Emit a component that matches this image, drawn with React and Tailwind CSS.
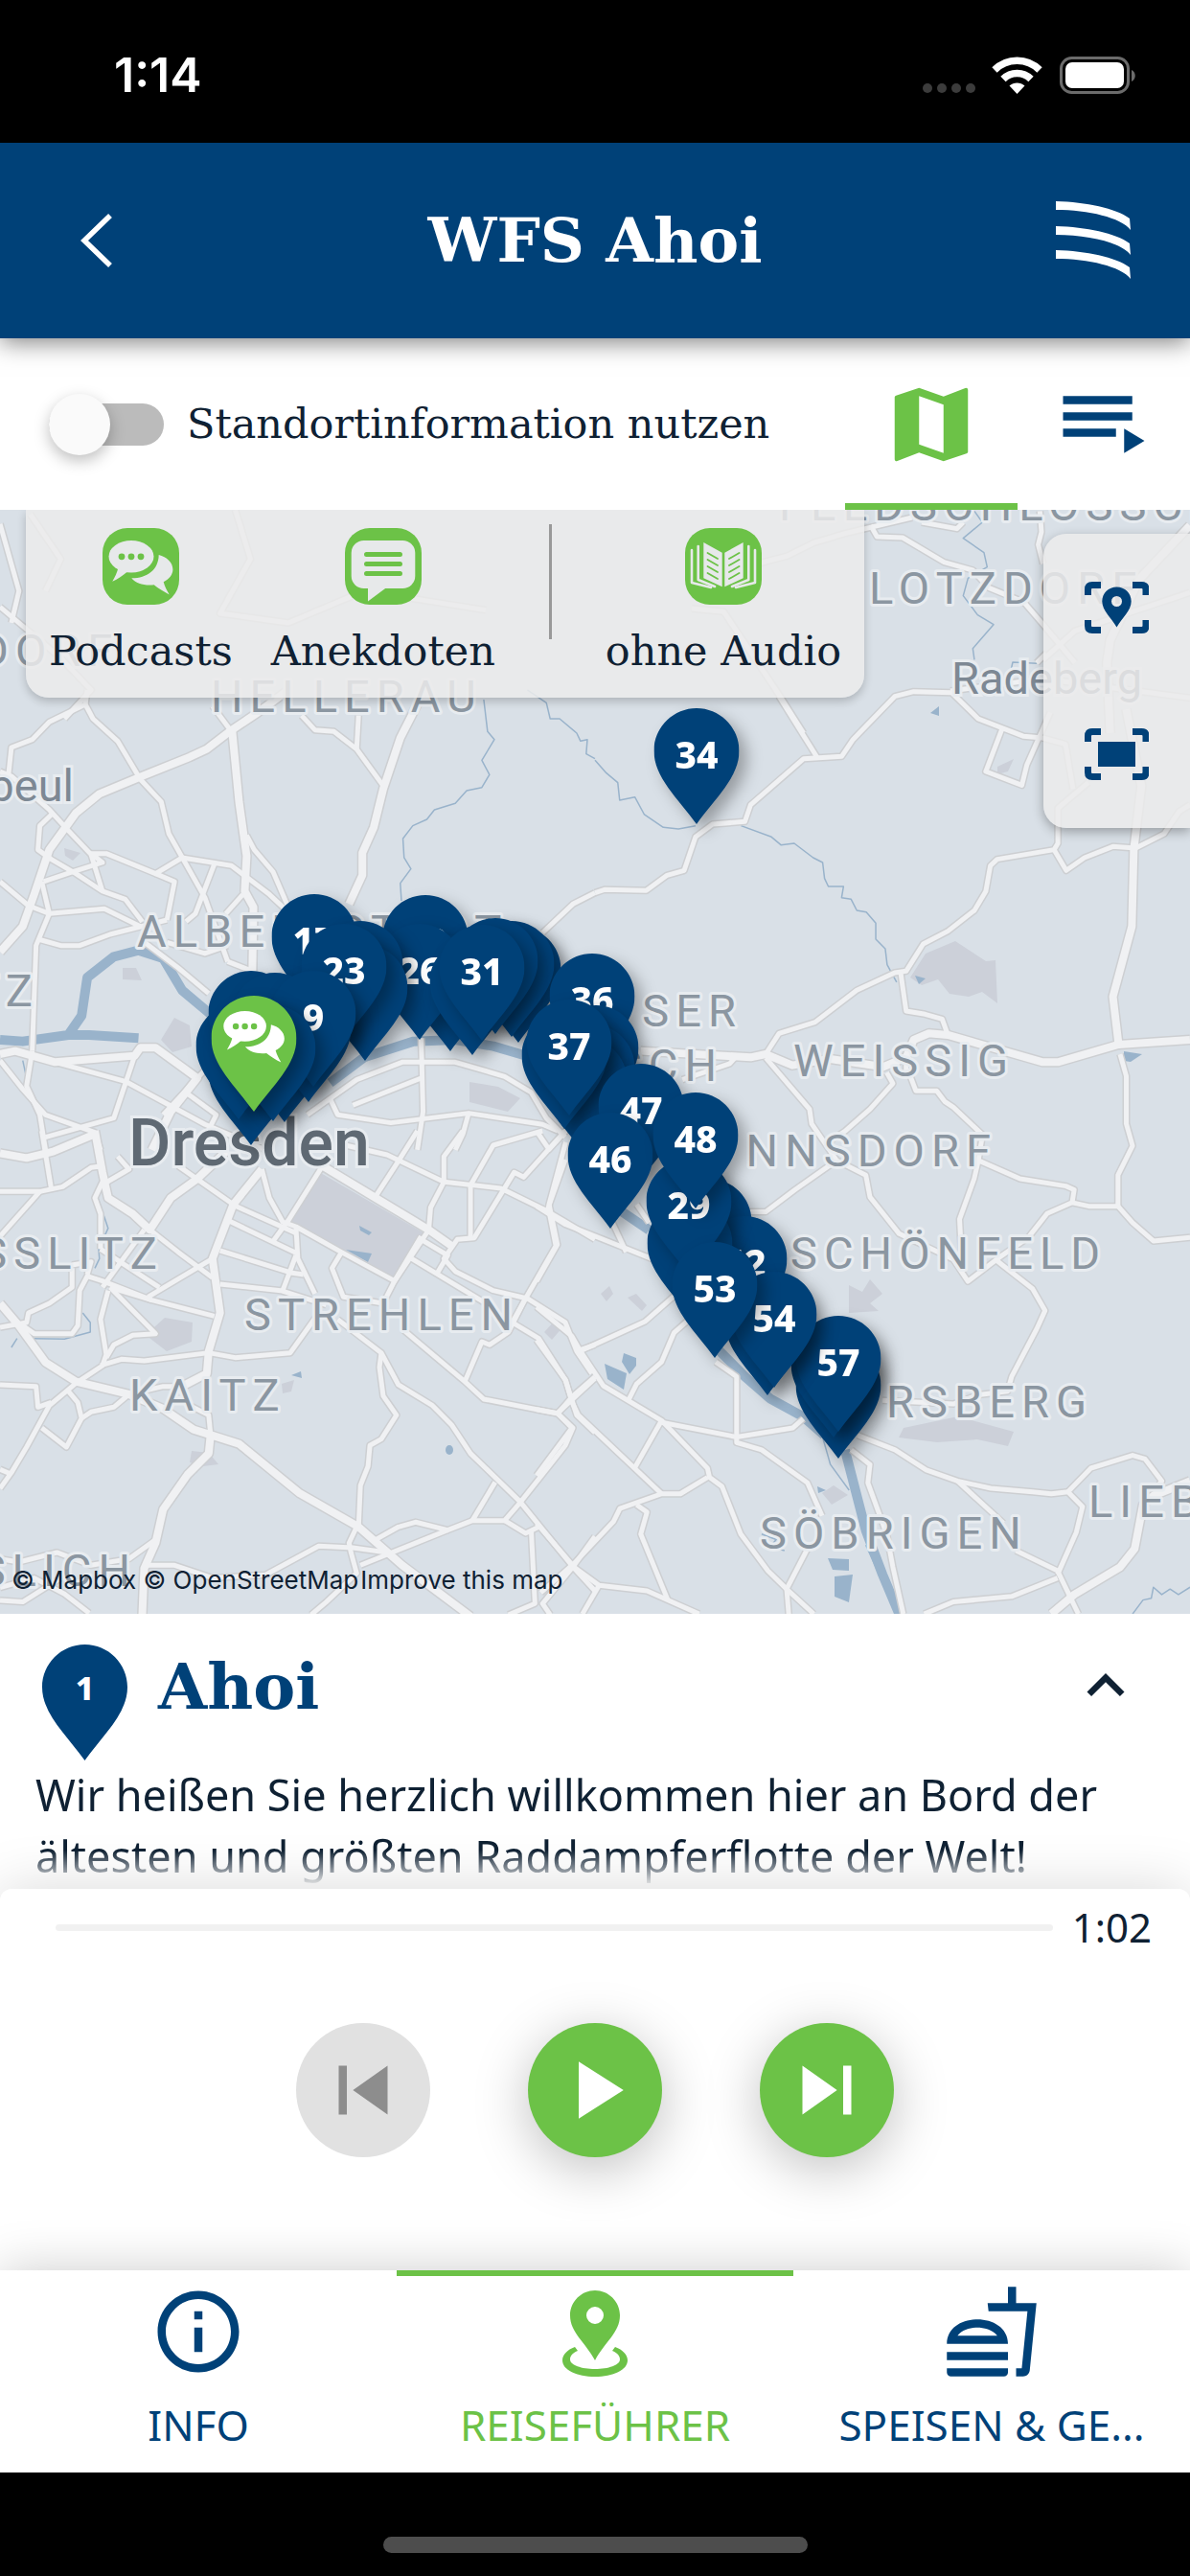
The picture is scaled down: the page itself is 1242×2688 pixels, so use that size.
import React, { useState } from "react";
import {
  MdInfoOutline,
  MdKeyboardArrowUp,
  MdMap,
  MdOutlineFastfood,
  MdPlayArrow,
  MdSkipNext,
  MdSkipPrevious,
} from "react-icons/md";

// Map tiles: every tile has its own drawing units, scaled into map pixels
const tiles = [
  {
    transform: "translate(0 350) scale(0.7921 0.3333)",
    main: [],
    roads: ["0 590 25 800 15 900", "0 850 80 1010 120 1110 85 1200", "40 560 80 700 60 800", "310 546 330 700 290 870 380 900 480 800 640 860"],
    river: [],
    creeks: [],
  },
  {
    transform: "translate(0 720) scale(0.3960 0.3333)",
    main: [
      "0 820 60 740 90 640 130 500 200 385 262 325 370 272 500 210 545 185 605 130 680 70 760 0",
      "612 130 630 350 650 520 645 630 668 680 665 880",
      "1110 20 1085 80 1055 150 1010 310 985 430 955 510 955 580 920 670",
      "0 1140 40 1130 145 1165 355 1145 370 1120 410 1120 520 1215 450 1320 400 1440",
    ],
    roads: [
      "22 270 30 180 85 155 130 100 225 45 230 0",
      "225 45 245 90 310 160 370 280 425 350 445 450 540 650 600 850",
      "0 255 30 270 130 375 180 440 240 515 270 630",
      "140 385 105 425 100 500 135 530 200 575 270 630 330 655 375 725",
      "0 600 75 675 130 700 275 685 370 740",
      "115 600 190 570 270 540 240 512 280 512 410 575 480 525",
      "410 575 460 600 440 720",
      "480 525 610 550 710 640 755 690",
      "650 455 670 500 720 570 760 680",
      "565 545 515 700 490 725",
      "640 640 595 700",
      "100 780 160 800 210 800 290 765 440 720",
      "440 790 540 825 600 800",
      "795 80 830 125 880 130 940 185 1010 300",
      "945 80 940 185",
      "610 130 560 50",
      "85 1130 95 800 130 700 110 600",
      "370 780 470 870 550 950",
      "600 850 665 880",
      "145 1165 330 1225 540 1360 700 1440",
      "355 1145 300 1340 120 1400",
      "0 1160 60 1250 120 1330 250 1385 265 1440",
      "85 1130 70 1240 105 1330 120 1440",
      "540 1190 430 1330",
      "490 1260 570 1330 540 1400",
      "1110 1090 1115 1320 1100 1440",
      "810 1330 940 1220 1060 1165 1200 1165 1330 1210 1400 1260 1440 1340 1490 1400",
      "870 1280 890 1330 1030 1355 1235 1325 1430 1360 1470 1380",
      "1235 1325 1220 1390 1200 1440",
      "930 1300 1110 1215",
      "1430 760 1510 670 1568 635",
    ],
    river: [
      "0 1095 60 1100 180 1080 215 1020 230 900 300 835 365 815 430 840 480 940 560 1020 700 1180",
      "180 1080 235 1080 365 1090",
      "870 1230 960 1150 1090 1100 1200 1095 1300 1115 1400 1150",
    ],
    creeks: [
      "1275 30 1285 130 1303 155 1270 220 1290 265 1270 305 1230 315 1200 355 1145 375 1125 405 1088 425 1062 465 1065 525 1083 560 1055 605 1058 660",
      "1390 0 1440 40 1450 90 1475 90 1520 135 1530 160 1548 155 1545 200 1568 215",
      "430 840 450 870 468 905",
      "60 1160 70 1215",
    ],
  },
  {
    transform: "translate(621 720) scale(0.3960 0.3333)",
    main: [
      "1400 60 1440 300 1420 500 1415 740 1365 960 1380 1110 1220 1165 1180 1165 930 1080 880 1075 840 1095 820 1150 760 1180 620 1155 520 1175 450 1140 410 1150 120 1130",
      "1380 1110 1568 1095",
    ],
    roads: [
      "485 20 585 210",
      "0 635 25 625 135 628 190 580 235 565 265 460 310 420 395 412 410 360 550 215 650 208 680 155 790 20 840 5 940 8 1010 90 1130 145 1180 150 1240 170 1260 310",
      "1075 115 1030 255 1125 298 1138 235 1200 70",
      "1300 290 1220 370 1220 480 1210 500 1060 530 1042 550 1030 630 1000 690 930 755 865 795 820 880 790 885 690 940 580 1040 485 1075 450 1140",
      "1210 500 1242 565 1290 525 1365 490 1425 495 1500 450 1540 380 1568 360",
      "805 880 820 1005 870 1015 915 1030 930 1080",
      "230 1220 355 1170 370 1150",
      "820 1150 820 1215",
    ],
    river: [],
    creeks: [
      "0 220 30 260 60 290 65 345 105 335 130 390 180 430 220 435 265 425",
      "385 425 465 460 490 485 525 480 575 525 600 540 605 590 615 615 655 615 650 650 675 655 690 690 715 695 740 730 740 780 765 810 770 860 795 915",
    ],
  },
  {
    transform: "translate(0 1180) scale(0.3960 0.3333)",
    main: [
      "0 70 70 85 140 65 250 10",
      "250 0 270 130 285 210 350 260 395 310 450 210 520 150 600 60",
      "690 120 615 230 560 400 580 570 550 690 545 760 480 800",
      "0 540 50 610 120 725 200 785 340 825 430 870 510 935 630 980 790 1135 945 1240 1060 1360 1240 1520",
      "850 110 990 210 1130 310 1190 360",
      "555 950 550 1010 495 1075 430 1185 410 1290 380 1370 375 1515",
    ],
    roads: [
      "500 860 550 890 555 950",
      "0 190 105 190 165 175 240 115 270 110",
      "110 0 135 180",
      "105 190 0 330",
      "270 160 250 210 265 260 265 370",
      "275 165 340 120 310 80",
      "470 110 620 235 780 320",
      "600 280 785 385",
      "690 120 710 210 745 285 780 300 785 400 830 510",
      "850 110 760 280 720 345",
      "780 300 900 380 1040 470 1110 330",
      "580 375 770 445 800 450",
      "745 500 780 390",
      "580 480 740 500 860 545",
      "900 380 875 430 905 520 1010 540 1040 470",
      "395 310 470 380 560 460",
      "560 400 390 520",
      "400 530 270 470 230 455 210 500 205 610 190 635 90 635 60 610",
      "190 430 190 490 130 540 75 570 70 600 0 615",
      "230 450 240 410 190 420",
      "270 490 380 310",
      "265 370 420 490",
      "290 490 410 635 350 640 300 670 280 710",
      "290 490 400 530 565 580",
      "285 500 265 590 280 700 270 735 200 790 130 860 70 990 30 1070 0 1120",
      "0 1060 30 1075",
      "265 735 320 715 380 720 550 695 620 710 765 695 840 570",
      "0 795 95 800 100 865 135 850",
      "180 815 205 850 215 900 175 990 110 930",
      "215 900 240 880 300 865 340 825 430 800 480 800",
      "890 590 1005 695 1050 795 1140 860 1190 920 1240 1010 1370 1160 1510 1365 1568 1440",
      "1005 695 1000 740 1010 830 1045 890 1005 965 975 985 970 1050 950 1110 945 1240",
      "1060 620 1225 785 1275 840 1470 885 1510 930 1490 985 1370 1165 1330 1220 1245 1220 1180 1250 1095 1225 1050 1240 990 1280",
      "1225 785 1270 660 1290 670 1340 630 1385 525",
      "1245 1220 1305 1100",
      "1330 1220 1385 1260 1420 1240",
      "950 1360 1180 1250",
      "390 1360 460 1360 560 1400 700 1390 840 1300 930 1305 1020 1320",
      "940 1240 920 1290 925 1320 940 1385 860 1475 820 1515",
      "0 1340 50 1350 150 1320 240 1360 340 1340 410 1280",
      "0 1430 90 1400 170 1450 235 1510",
      "0 1470 60 1475 160 1400",
      "1400 1250 1410 1480 1340 1515",
      "1510 1365 1430 1480 1450 1515",
      "1510 1365 1568 1270",
      "990 205 1050 95 1100 0",
      "910 45 1020 75 1170 160 1320 180 1440 250 1568 340",
      "1220 0 1170 80 1170 160 1135 240 1130 310 1040 470",
      "1430 0 1300 45 1240 170 1240 335",
      "1490 0 1380 145 1355 130 1250 335 1205 340 1170 400 1200 440 1300 500 1390 525 1490 600 1520 690 1560 760",
      "1490 90 1445 240 1465 360 1385 525 1350 600 1420 650 1490 780 1520 890 1568 945",
      "1110 340 1180 390 1150 450",
      "1085 400 1280 540",
      "1470 885 1510 830 1568 770",
      "1520 690 1568 670",
    ],
    river: [],
    creeks: ["255 200 285 305 260 370 262 400 250 430", "218 570 238 600 238 630 170 652 90 650", "45 650 30 678"],
  },
  {
    transform: "translate(560 1100) scale(0.4350 0.3823)",
    main: ["1568 1165 1480 1205 1455 1230 1435 1350 1400 1400 1290 1475 1235 1528"],
    roads: [
      "0 415 70 465 170 510 280 560 340 640",
      "90 185 30 260 0 210",
      "70 240 30 410 50 520 0 620",
      "170 430 215 540",
      "240 410 270 460",
      "0 690 85 770 105 810 160 905 300 1000 410 1130 415 1155 445 1180 490 1310 555 1410 600 1460 665 1528",
      "105 810 260 730 330 660",
      "0 780 70 890 85 950 100 985 300 1200",
      "0 970 50 980 140 885",
      "50 980 85 1020 0 1150",
      "300 1000 235 1130",
      "300 1005 480 1045 615 1020 640 995",
      "430 840 480 880 480 1060 540 1080 650 1170 685 1260",
      "220 945 240 900 300 840 330 760 370 720",
      "410 1155 345 1200 300 1200 200 1240 185 1275 90 1390 10 1470",
      "240 1230 265 1250 250 1310 315 1490",
      "0 1280 90 1400 150 1450 265 1465 390 1528",
      "150 1450 110 1528",
      "600 1460 650 1350",
      "600 1460 605 1528",
      "770 1040 860 1080 935 1135 1010 1165 1090 1185 1190 1195 1235 1200 1275 1195 1310 1235 1295 1305 1250 1420",
      "1275 1195 1330 1130 1430 1095 1460 1105 1500 1165 1480 1195",
      "1010 1165 1120 1280",
      "1150 1355 1250 1410 1300 1528",
      "930 1528 1000 1495 1140 1480 1250 1430",
      "755 1080 800 1120 795 1170 840 1310 855 1400 880 1528",
      "1100 560 1190 640 1220 700 1200 750 1140 880 1130 920 1060 930 1000 955 830 945",
      "550 10 655 150 660 190 720 290 790 330 800 390 870 490 1000 560 1035 620 1110 555 1180 500 1225 435 1285 405 1290 370 1270 360 1160 340 1060 290 1050 340 1015 450 1020 560",
      "720 290 620 370 550 430 500 430",
      "700 240 740 210 800 150 855 80 840 50",
      "890 40 910 100 960 100 980 130 1000 145 1070 220 1060 290",
      "1400 0 1415 60 1415 190 1430 250 1395 330 1395 415 1325 415 1285 405",
      "1395 415 1430 460 1480 510 1568 500",
    ],
    river: ["205 430 270 480", "430 800 500 880 560 940 640 990 690 1040", "740 1080 765 1190 790 1300 830 1420 870 1528"],
    creeks: [
      "685 1040 705 1120 750 1190",
      "790 1340 830 1440",
      "1430 1528 1455 1490 1475 1485 1480 1455 1500 1475 1520 1460 1540 1475 1568 1455",
      "540 1310 575 1325 560 1345 595 1355",
    ],
  },
  {
    transform: "translate(722 525) scale(0.3333)",
    main: ["1310 720 1300 500 1310 430 1400 240 1560 70"],
    roads: [
      "205 190 300 165 380 125 480 95 690 45",
      "560 70 580 105 660 108 790 185 880 210 930 265 1040 310 1100 380 1200 500",
      "720 60 830 80 850 60",
      "1090 25 1095 90 1085 130 1100 190",
      "0 330 100 340 280 610 350 720",
      "1100 490 1200 400 1560 280",
      "810 588 1100 550 1560 610",
      "1080 500 1110 470",
    ],
    river: [],
    creeks: ["885 25 910 60 850 110 915 155 925 200 865 235 850 290 895 350 945 380 880 455 885 490", "1000 520 1005 498 1080 502"],
  },
];

const areas = [
  "333,1223 443,1287 412,1337 303,1277",
  "172,1375 201,1380 200,1400 174,1410 152,1393",
  "966,995 997,982 1029,1003 1039,1002 1041,1047 1025,1035 1011,1040 991,1037 979,1022 962,1028 950,1020",
  "490,1129 520,1134 543,1146 530,1160 490,1150",
  "168,1085 182,1062 198,1070 200,1092 180,1098",
  "128,1010 142,1010 148,1023 128,1022",
  "943,1490 1000,1478 1058,1494 1052,1509 1020,1502 978,1505 938,1500",
  "886,1341 900,1348 908,1335 921,1350 908,1360 917,1368 886,1370",
  "200,1514 218,1516 228,1528 212,1530 198,1526",
  "580,1377 588,1384 576,1398 568,1390",
  "627,1350 636,1342 640,1350 633,1358",
  "655,1354 664,1350 675,1362 670,1368",
  "870,1550 885,1560 868,1570 858,1558",
  "1041,800 1058,792 1052,805 1041,808",
  "67,885 84,890 76,898 68,893",
  "294,1444 307,1440 304,1452 295,1454",
];

const lakes = [
  "631,1423 654,1433 651,1450 634,1439",
  "651,1412 664,1417 664,1425 657,1434 649,1421",
  "864,1626 886,1627 886,1639 869,1638",
  "871,1645 890,1643 886,1672 871,1666",
  "375,1279 388,1286 385,1289 376,1284",
  "361,1304 388,1308 384,1317",
  "304,1435 314,1431 315,1438",
  "1173,1097 1192,1100 1180,1108 1173,1107",
  "955,1018 966,1021 959,1027",
  "971,744 980,737 980,747",
  "853,1551 862,1555 854,1558",
];

const labels = [
  { x: 145, y: 988, text: "ALBERTSTADT" },
  { x: 222, y: 743, text: "HELLERAU" },
  { x: 257, y: 1388, text: "STREHLEN" },
  { x: 137, y: 1472, text: "KAITZ" },
  { x: 164, y: 1324, text: "GORBSSLITZ", end: true },
  { x: 136, y: 1655, text: "SLICH", end: true },
  { x: 34, y: 1050, text: "TZ", end: true },
  { x: 768, y: 1071, text: "SER", end: true },
  { x: 748, y: 1128, text: "SCH", end: true },
  { x: 830, y: 1123, text: "WEISSIG" },
  { x: 1034, y: 1217, text: "NNSDORF", end: true },
  { x: 827, y: 1324, text: "SCHÖNFELD" },
  { x: 927, y: 1479, text: "RSBERG" },
  { x: 795, y: 1616, text: "SÖBRIGEN" },
  { x: 1138, y: 1583, text: "LIEBE" },
  { x: 909, y: 630, text: "LOTZDORF" },
  { x: 815, y: 543, text: "FELDSCHLÖSSCHEN" },
  { x: -20, y: 695, text: "DORF" },
];

// x / y is the tip of the pin; later pins lie over earlier ones
const pins = [
  { x: 727, y: 860, n: 34 },
  { x: 444, y: 1055, n: 28 },
  { x: 328, y: 1054, n: 17 },
  { x: 470, y: 1097 },
  { x: 438, y: 1085, n: 26 },
  { x: 493, y: 1101 },
  { x: 541, y: 1088 },
  { x: 534, y: 1082 },
  { x: 517, y: 1079 },
  { x: 503, y: 1086, n: 31 },
  { x: 376, y: 1082 },
  { x: 381, y: 1107 },
  { x: 359, y: 1085, n: 23 },
  { x: 618, y: 1116, n: 36 },
  { x: 622, y: 1170 },
  { x: 618, y: 1190 },
  { x: 610, y: 1204 },
  { x: 589, y: 1178 },
  { x: 594, y: 1164, n: 37 },
  { x: 669, y: 1231, n: 47 },
  { x: 637, y: 1282, n: 46 },
  { x: 740, y: 1351 },
  { x: 777, y: 1390, n: 52 },
  { x: 720, y: 1374 },
  { x: 719, y: 1330, n: 29 },
  { x: 726, y: 1261, n: 48 },
  { x: 875, y: 1522 },
  { x: 870, y: 1500 },
  { x: 875, y: 1494, n: 57 },
  { x: 801, y: 1456 },
  { x: 808, y: 1448, n: 54 },
  { x: 746, y: 1417, n: 53 },
  { x: 262, y: 1195 },
  { x: 249, y: 1168 },
  { x: 262, y: 1134 },
  { x: 297, y: 1171 },
  { x: 322, y: 1150 },
  { x: 287, y: 1136 },
  { x: 327, y: 1134, n: 9 },
  { x: 285, y: 1170 },
  { x: 265, y: 1160, audio: true },
];

const MAP_TOP = 532;

function TalkGlyph({ dots }) {
  return (
    <>
      <ellipse cx="30" cy="29.7" rx="23.5" ry="16.7" />
      <path d="M16.3 42C15 47 13 51 10.3 55.8C16 53 21 50 26 45.5Z" />
      <path d="M58.7 28C67 30 73.4 36 73.4 43.3C73.4 48.5 69.5 53.5 63.7 56.3C65 61 67 65 69.7 69.4C64 66.5 58 63 53.7 59.3C44 60.5 35 58 30.3 52.3C46 52.5 58.5 44 58.7 28Z" />
      <g fill={dots}>
        <circle cx="20" cy="29.8" r="3.4" />
        <circle cx="30" cy="29.8" r="3.4" />
        <circle cx="40" cy="29.8" r="3.4" />
      </g>
    </>
  );
}

function PinShape({ audio }) {
  return (
    <svg viewBox="0 0 89 121" className="absolute inset-0 h-full w-full" aria-hidden="true">
      <path
        d="M44.5 0C69 0 89 20 89 44.5C89 72 64 94 44.5 121C25 94 0 72 0 44.5C0 20 20 0 44.5 0Z"
        fill={audio ? "#6cc247" : "#004178"}
      />
      {audio && (
        <g transform="translate(6.6 3.6) scale(0.95)" fill="#fff">
          <TalkGlyph dots="#6cc247" />
        </g>
      )}
    </svg>
  );
}

function StatusBar() {
  return (
    <div className="flex h-[149px] items-center justify-between bg-black pr-14 pl-[119px]">
      <span className="pt-2 font-['Inter',sans-serif] text-[50px] font-semibold text-white">1:14</span>
      <svg viewBox="0 0 226 44" className="mt-2 h-11 w-[226px]" aria-hidden="true">
        <g fill="#3c3c3c">
          <circle cx="8" cy="35" r="5" />
          <circle cx="23" cy="35" r="5" />
          <circle cx="38" cy="35" r="5" />
          <circle cx="53" cy="35" r="5" />
        </g>
        <g fill="none" stroke="#fff" strokeWidth="7.5">
          <path d="M78 16C91 3 112 3 125 16" />
          <path d="M87 25.5C95 17.5 108 17.5 116 25.5" />
        </g>
        <path d="M101.5 41L93.5 32.5C98 28.5 105 28.5 109.5 32.5Z" fill="#fff" />
        <rect x="147.5" y="3.5" width="70" height="36" rx="11" fill="none" stroke="#6b6b6b" strokeWidth="3" />
        <rect x="152" y="8" width="61" height="27" rx="7" fill="#fff" />
        <path d="M221 16V28C226 26 226 18 221 16Z" fill="#6b6b6b" />
      </svg>
    </div>
  );
}

function Header() {
  return (
    <header className="relative z-20 grid h-51 grid-cols-[1fr_auto_1fr] items-center bg-[#004178] px-[62px] shadow-[0_4px_24px_rgba(0,0,0,0.5)]">
      <button type="button" aria-label="Zurück" className="flex size-19 items-center justify-center">
        <svg viewBox="0 0 72 72" className="size-18" fill="none" stroke="#fff" strokeWidth="5.5">
          <path d="M51 10L24 36L51 62" />
        </svg>
      </button>
      <h1 className="font-['DejaVu_Serif',serif] text-[64px] font-bold text-white">WFS Ahoi</h1>
      <button type="button" aria-label="Menü" className="justify-self-end">
        <svg viewBox="0 0 78 82" className="h-[82px] w-[78px]" fill="#fff">
          <path d="M0 0C32 1 62 7 77 18L78 30C68 17 34 9 0 9Z" />
          <path d="M0 26C32 27 62 33 77 44L78 56C68 43 34 35 0 35Z" />
          <path d="M0 51C32 52 62 58 77 69L78 81C68 68 34 60 0 60Z" />
        </svg>
      </button>
    </header>
  );
}

function Toolbar() {
  const [useLocation, setUseLocation] = useState(false);

  return (
    <div className="flex h-[179px] bg-white">
      <label className="flex flex-1 items-center gap-6 pl-[51px] font-['DejaVu_Serif',serif] text-[43px] whitespace-nowrap text-[#0f2133]">
        <input
          type="checkbox"
          role="switch"
          checked={useLocation}
          onChange={(e) => setUseLocation(e.target.checked)}
          className="relative h-11 w-30 shrink-0 appearance-none rounded-full bg-[#bbb] before:absolute before:-top-[10px] before:left-0 before:size-16 before:rounded-full before:bg-[#fafafa] before:shadow-[0_6px_16px_rgba(0,0,0,0.25)] checked:bg-[#6cc247] checked:before:left-14"
        />
        Standortinformation nutzen
      </label>
      <button
        type="button"
        aria-label="Karte"
        className="flex w-45 items-center justify-center border-t-[7px] border-b-[7px] border-t-transparent border-b-[#6cc247] text-[#6cc247]"
      >
        <MdMap className="size-[102px]" />
      </button>
      <button type="button" aria-label="Liste" className="flex w-45 items-center justify-center text-[#004178]">
        <svg viewBox="0 0 24 24" className="size-[102px]" fill="currentColor">
          <path d="M19 9H2v2h17V9zm0-4H2v2h17V5zM2 15h13v-2H2v2zm15-2v6l5-3-5-3z" />
        </svg>
      </button>
    </div>
  );
}

function MapDrawing() {
  return (
    <svg
      viewBox="0 532 1242 1152"
      preserveAspectRatio="xMinYMin slice"
      className="absolute inset-0 h-full w-full bg-[#d9e0e7]"
      role="img"
      aria-label="Karte von Dresden"
    >
      <g fill="#ccd0d9">
        {areas.map((points) => (
          <polygon key={points} points={points} />
        ))}
      </g>
      <g fill="#99b3cb">
        {lakes.map((points) => (
          <polygon key={points} points={points} />
        ))}
        <ellipse cx="469" cy="1513" rx="4" ry="5" />
      </g>
      {tiles.map((t) => (
        <g key={t.transform} transform={t.transform} fill="none" stroke="#99b3cb" strokeLinejoin="round">
          {t.creeks.map((p) => (
            <polyline key={p} points={p} strokeWidth="1.5" vectorEffect="non-scaling-stroke" />
          ))}
          {t.river.map((p) => (
            <polyline key={p} points={p} strokeWidth="10" vectorEffect="non-scaling-stroke" />
          ))}
        </g>
      ))}
      {tiles.map((t) => (
        <g key={t.transform} transform={t.transform} fill="none" stroke="#cdcfd2" strokeLinejoin="round">
          {t.roads.map((p) => (
            <polyline key={p} points={p} strokeWidth="8" vectorEffect="non-scaling-stroke" />
          ))}
          {t.main.map((p) => (
            <polyline key={p} points={p} strokeWidth="11" vectorEffect="non-scaling-stroke" />
          ))}
        </g>
      ))}
      {tiles.map((t) => (
        <g key={t.transform} transform={t.transform} fill="none" stroke="#f0f1f3" strokeLinejoin="round">
          {t.roads.map((p) => (
            <polyline key={p} points={p} strokeWidth="5" vectorEffect="non-scaling-stroke" />
          ))}
          {t.main.map((p) => (
            <polyline key={p} points={p} strokeWidth="8" vectorEffect="non-scaling-stroke" />
          ))}
        </g>
      ))}
      <g
        className="font-['Roboto',sans-serif] text-[47px] tracking-[0.15em]"
        fill="#8b96a1"
        stroke="#e8ecf0"
        strokeWidth="6"
        strokeLinejoin="round"
        paintOrder="stroke"
      >
        {labels.map((l) => (
          <text key={l.text} x={l.end ? l.x + 7 : l.x - 2} y={l.y} textAnchor={l.end ? "end" : "start"}>
            {l.text}
          </text>
        ))}
      </g>
      <g
        className="font-['Roboto',sans-serif] text-[47px]"
        fill="#7d8894"
        stroke="#e8ecf0"
        strokeWidth="6"
        paintOrder="stroke"
      >
        <text x="77" y="836" textAnchor="end">
          Radebeul
        </text>
        <text x="993" y="724">
          Radeberg
        </text>
        <text x="134" y="1216" className="text-[68px] font-medium" fill="#5f6973">
          Dresden
        </text>
      </g>
    </svg>
  );
}

function FilterPanel() {
  const item = "flex flex-col items-center gap-4";

  return (
    <div className="absolute top-0 left-[27px] flex gap-10 rounded-b-3xl bg-[#ebebeb]/85 px-6 pt-[19px] pb-4 font-['DejaVu_Serif',serif] text-[43px] text-[#0f2133] shadow-[0_4px_10px_rgba(0,0,0,0.2)]">
      <button type="button" className={item}>
        <svg viewBox="0 0 80 80" className="size-20" aria-hidden="true">
          <rect width="80" height="80" rx="26" fill="#6cc247" />
          <g fill="#e7e9ea">
            <TalkGlyph dots="#6cc247" />
          </g>
        </svg>
        Podcasts
      </button>
      <button type="button" className={item}>
        <svg viewBox="0 0 80 80" className="size-20" aria-hidden="true">
          <rect width="80" height="80" rx="26" fill="#6cc247" />
          <rect x="6.7" y="13" width="66.6" height="50" rx="13" fill="#e7e9ea" />
          <path d="M24 62V76.5L43.5 62Z" fill="#e7e9ea" />
          <path d="M22.5 27.5H57.5M22.5 37.5H57.5M22.5 47.5H57.5" stroke="#6cc247" strokeWidth="5" strokeLinecap="round" />
        </svg>
        Anekdoten
      </button>
      <div className="ml-4 h-30 w-[3px] -translate-y-1 bg-[#999]" />
      <button type="button" className={`${item} ml-4`}>
        <svg viewBox="0 0 80 80" className="size-20" aria-hidden="true">
          <rect width="80" height="80" rx="26" fill="#6cc247" />
          <g fill="#e7e9ea">
            <path d="M19.3 15L38.7 25.7V61.3L19.3 52.3Z" />
            <path d="M60.7 15L41.3 25.7V61.3L60.7 52.3Z" />
          </g>
          <g fill="none" stroke="#e7e9ea" strokeWidth="2.6" strokeLinecap="round" strokeLinejoin="round">
            <path d="M13.7 19V54L31 61M66.3 19V54L49 61" />
            <path d="M7 23V57L27 62M73 23V57L53 62" />
          </g>
          <g stroke="#6cc247" strokeWidth="1.8" strokeLinecap="round">
            <path d="M23.5 26L34 32M23.5 33L34 39M23.5 40L34 46M23.5 47L34 53" />
            <path d="M56.5 26L46 32M56.5 33L46 39M56.5 40L46 46M56.5 47L46 53" />
          </g>
        </svg>
        ohne Audio
      </button>
    </div>
  );
}

function ScanFrame() {
  return (
    <path
      d="M3.5 14V8Q3.5 3.5 8 3.5H17M50 3.5H59.5Q64 3.5 64 8V14M64 40V46Q64 50.5 59.5 50.5H50M17 50.5H8Q3.5 50.5 3.5 46V40"
      fill="none"
      stroke="#004178"
      strokeWidth="7"
    />
  );
}

function MapControls() {
  return (
    <div className="absolute top-[25px] right-0 flex flex-col gap-[99px] rounded-l-3xl bg-[#ebebeb]/85 pt-[50px] pr-[43px] pb-[50px] pl-[43px] shadow-[0_4px_12px_rgba(0,0,0,0.3)]">
      <button type="button" aria-label="Position zentrieren">
        <svg viewBox="0 0 67 54" className="h-[54px] w-[67px]">
          <ScanFrame />
          <path
            d="M33.5 5.5C42 5.5 48.7 12 48.7 20.5C48.7 30 39 38 33.5 47.5C28 38 18.3 30 18.3 20.5C18.3 12 25 5.5 33.5 5.5ZM33.5 15A5.5 5.5 0 1 0 33.5 26A5.5 5.5 0 1 0 33.5 15Z"
            fill="#004178"
          />
        </svg>
      </button>
      <button type="button" aria-label="Ganze Route zeigen">
        <svg viewBox="0 0 67 54" className="h-[54px] w-[67px]">
          <ScanFrame />
          <rect x="14" y="14" width="39" height="26" fill="#004178" />
        </svg>
      </button>
    </div>
  );
}

function TourMap() {
  return (
    <section className="relative min-h-[1152px] flex-1 overflow-hidden">
      <MapDrawing />
      {pins.map((pin, i) => (
        <button
          key={i}
          type="button"
          aria-label={pin.n ? `Station ${pin.n}` : "Station"}
          className="absolute h-[121px] w-[89px] -translate-x-1/2 -translate-y-full font-['Noto_Sans',sans-serif] text-[39px] leading-24 font-extrabold text-white drop-shadow-[8px_8px_8px_rgba(0,0,0,0.3)]"
          style={{ left: pin.x, top: pin.y - MAP_TOP }}
        >
          <PinShape audio={pin.audio} />
          <span className="absolute inset-x-0 top-0">{pin.n}</span>
        </button>
      ))}
      <FilterPanel />
      <MapControls />
      <div className="absolute bottom-4 left-3 flex gap-[2px] font-['Inter',sans-serif] text-[26px] text-[#0f2133]">
        <span>
          <a href="#mapbox">© Mapbox</a> <a href="#osm">© OpenStreetMap</a>
        </span>
        <a href="#improve">Improve this map</a>
      </div>
    </section>
  );
}

function StationInfo() {
  return (
    <section className="h-[287px] bg-white px-[37px] pt-8">
      <div className="flex items-start gap-8 pl-[7px]">
        <div className="relative h-[121px] w-[89px] text-center font-['Noto_Sans',sans-serif] text-[34px] leading-[90px] font-extrabold text-white">
          <PinShape />
          <span className="relative">1</span>
        </div>
        <h2 className="flex-1 font-['DejaVu_Serif',serif] text-[66px] leading-[88px] font-bold text-[#004178]">Ahoi</h2>
        <button type="button" aria-label="Text einklappen" className="mt-1 mr-3 text-[#0f2133]">
          <MdKeyboardArrowUp className="size-[78px]" />
        </button>
      </div>
      <p className="mt-1 font-['Noto_Sans',sans-serif] text-[45px] leading-16 text-[#0f2133] [mask-image:linear-gradient(#000_70%,transparent)]">
        Wir heißen Sie herzlich willkommen hier an Bord der ältesten und größten Raddampferflotte der Welt!
      </p>
    </section>
  );
}

function Player() {
  const round = "flex size-35 items-center justify-center rounded-full";
  const green = "bg-[#6cc247] text-white shadow-[0_12px_56px_rgba(0,0,0,0.25)]";

  return (
    <section className="relative h-[398px] rounded-t-xl bg-white shadow-[0_0_60px_rgba(0,0,0,0.15)]">
      <div className="flex items-center gap-5 pt-3 pr-10 pl-[58px]">
        <div className="h-[7px] flex-1 rounded-full bg-[#f1f1f1]" />
        <time className="font-['Noto_Sans',sans-serif] text-[42px] leading-[56px] text-[#0f2133]">1:02</time>
      </div>
      <div className="flex justify-center gap-[102px] pt-18">
        <button type="button" disabled aria-label="Vorherige Station" className={`${round} bg-[#e1e1e1] text-[#8d8d8d]`}>
          <MdSkipPrevious className="size-[102px]" />
        </button>
        <button type="button" aria-label="Abspielen" className={`${round} ${green}`}>
          <MdPlayArrow className="size-[102px]" />
        </button>
        <button type="button" aria-label="Nächste Station" className={`${round} ${green}`}>
          <MdSkipNext className="size-[102px]" />
        </button>
      </div>
    </section>
  );
}

function GuideIcon() {
  return (
    <svg viewBox="0 0 68 102" className="h-[102px] w-17" fill="currentColor" aria-hidden="true">
      <path d="M34 8C48 8 60 19.5 60 34C60 52 44 62 34 81C24 62 8 52 8 34C8 19.5 20 8 34 8ZM34 25A9 9 0 1 0 34 43A9 9 0 1 0 34 25Z" />
      <path d="M13 67C5 70 0 75 0 81C0 91 15 98 34 98C53 98 68 91 68 81C68 75 63 70 55 67L52 71C57 73 60 76 60 80C60 86 48 90 34 90C20 90 8 86 8 80C8 76 11 73 16 71Z" />
    </svg>
  );
}

const tabs = [
  { href: "#info", label: "INFO", Icon: MdInfoOutline },
  { href: "#guide", label: "REISEFÜHRER", Icon: GuideIcon, active: true },
  { href: "#food", label: "SPEISEN & GE...", Icon: MdOutlineFastfood },
];

function TabBar() {
  return (
    <nav className="relative grid h-[211px] grid-cols-3 bg-white shadow-[0_0_50px_rgba(0,0,0,0.2)]">
      {tabs.map(({ href, label, Icon, active }) => (
        <a
          key={href}
          href={href}
          className={[
            "flex flex-col items-center gap-4 border-t-[6px] pt-[7px] font-['Noto_Sans',sans-serif] text-[44px] leading-15 whitespace-nowrap",
            active ? "border-[#6cc247] text-[#6cc247]" : "border-transparent text-[#004178]",
          ].join(" ")}
        >
          <Icon className="h-[102px] w-[102px]" />
          {label}
        </a>
      ))}
    </nav>
  );
}

export default function App() {
  return (
    <div className="flex min-h-screen flex-col bg-white">
      <StatusBar />
      <Header />
      <Toolbar />
      <TourMap />
      <StationInfo />
      <Player />
      <TabBar />
      <div className="relative flex h-[108px] items-end justify-center bg-black pb-6">
        <div className="h-[17px] w-[443px] rounded-full bg-[#4d4d4d]" />
      </div>
    </div>
  );
}
